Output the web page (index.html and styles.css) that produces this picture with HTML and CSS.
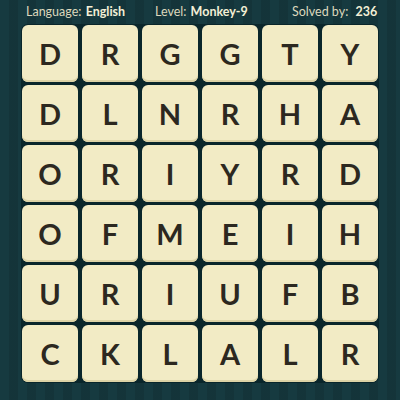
FILE: index.html
```html
<!DOCTYPE html>
<html>
<head>
<meta charset="utf-8">
<link rel="stylesheet" href="styles.css">
</head>
<body>
<div class="page">
  <div class="header">
    <span class="item lang">Language: <b>English</b></span>
    <span class="item level">Level: <b>Monkey-9</b></span>
    <span class="item solved">Solved by: <b class="num">236</b></span>
  </div>
  <div class="board">
    <div class="tile">D</div><div class="tile">R</div><div class="tile">G</div><div class="tile">G</div><div class="tile">T</div><div class="tile">Y</div>
    <div class="tile">D</div><div class="tile">L</div><div class="tile">N</div><div class="tile">R</div><div class="tile">H</div><div class="tile">A</div>
    <div class="tile">O</div><div class="tile">R</div><div class="tile">I</div><div class="tile">Y</div><div class="tile">R</div><div class="tile">D</div>
    <div class="tile">O</div><div class="tile">F</div><div class="tile">M</div><div class="tile">E</div><div class="tile">I</div><div class="tile">H</div>
    <div class="tile">U</div><div class="tile">R</div><div class="tile">I</div><div class="tile">U</div><div class="tile">F</div><div class="tile">B</div>
    <div class="tile">C</div><div class="tile">K</div><div class="tile">L</div><div class="tile">A</div><div class="tile">L</div><div class="tile">R</div>
  </div>
</div>
</body>
</html>
```
FILE: styles.css
```css
html, body {
  margin: 0;
  padding: 0;
}
body {
  width: 400px;
  height: 400px;
  overflow: hidden;
  background-color: #163a40;
  background-image: repeating-linear-gradient(90deg,
    rgba(0,0,0,0.0) 0px, rgba(0,0,0,0.0) 9px,
    rgba(0,0,0,0.10) 9px, rgba(0,0,0,0.10) 18px);
  font-family: Lato, "Open Sans", sans-serif;
}
.page {
  display: flex;
  flex-direction: column;
}
.header {
  height: 23px;
  display: flex;
  align-items: center;
  padding-left: 26px;
  color: #dcd8bd;
  font-size: 12.5px;
  font-weight: 400;
}
.header b {
  color: #f3efd6;
  font-weight: 700;
  margin-left: 1px;
}
.header .num { margin-left: 4px; }
.lang { width: 129px; }
.level { width: 137px; }
.board {
  margin-left: 21px;
  width: 358px;
  padding: 1px;
  box-sizing: border-box;
  background: #0a262b;
  border-radius: 7px;
  display: grid;
  grid-template-columns: repeat(6, 56px);
  grid-auto-rows: 57px;
  column-gap: 4px;
  row-gap: 3px;
  margin-top: 1px;
}
.tile {
  background: #f2ebc5;
  border-radius: 6px;
  box-shadow: inset 0 -2px 0 #ddd3a6;
  display: flex;
  align-items: center;
  justify-content: center;
  color: #2c2820;
  font-size: 29px;
  font-weight: 700;
}
```
